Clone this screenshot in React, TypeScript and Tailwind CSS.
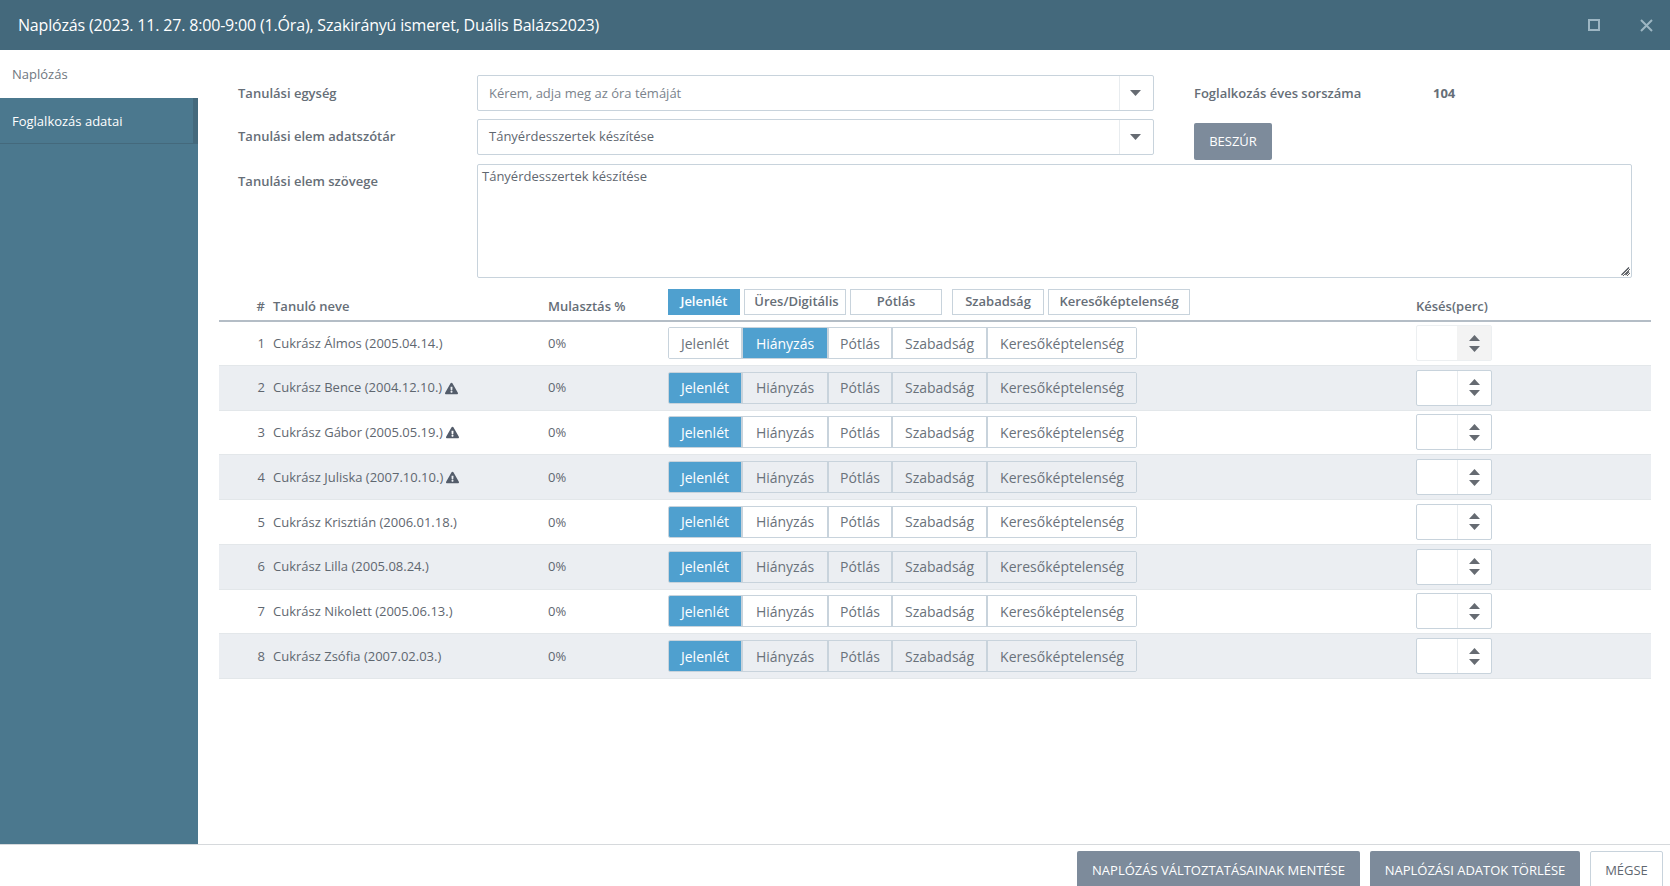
import React from "react";
import { FaExclamationTriangle } from "react-icons/fa";

const students: [string, boolean][] = [
  ["Cukrász Álmos (2005.04.14.)", false],
  ["Cukrász Bence (2004.12.10.)", true],
  ["Cukrász Gábor (2005.05.19.)", true],
  ["Cukrász Juliska (2007.10.10.)", true],
  ["Cukrász Krisztián (2006.01.18.)", false],
  ["Cukrász Lilla (2005.08.24.)", false],
  ["Cukrász Nikolett (2005.06.13.)", false],
  ["Cukrász Zsófia (2007.02.03.)", false],
];

function Caret({ up = false }: { up?: boolean }) {
  return (
    <svg width="11" height="6" viewBox="0 0 11 6">
      <path d={up ? "M0 6 L5.5 0 L11 6 Z" : "M0 0 L11 0 L5.5 6 Z"} fill="#666b72" />
    </svg>
  );
}

function Select({ text, placeholder = false, first = false }: { text: string; placeholder?: boolean; first?: boolean }) {
  return (
    <div className="flex h-[36px] w-[677px] items-stretch rounded-[2px] border border-[#c8d3dc] bg-white">
      <div className={`flex flex-1 items-center pl-[11px] text-[13px] ${first ? "pt-[2px]" : ""} ${placeholder ? "text-[#7b838c]" : "text-[#5f6770]"}`}>{text}</div>
      <div className="flex w-[34px] items-center justify-center border-l border-[#e8ecef] pr-[2px]">
        <Caret />
      </div>
    </div>
  );
}

const segs: [string, string][] = [
  ["Jelenlét", "w-[72px]"],
  ["Hiányzás", "w-[86px]"],
  ["Pótlás", "w-[64px]"],
  ["Szabadság", "w-[95px]"],
  ["Keresőképtelenség", "w-[150px]"],
];

function Segments({ active, shaded }: { active: number; shaded: boolean }) {
  return (
    <div className="flex h-[32px] w-[469px] overflow-hidden rounded-[2px] border border-[#c8d3dc]">
      {segs.map(([label, w], i) => (
        <div
          key={label}
          className={`flex items-center justify-center text-[14px] ${w} ${i > 0 ? "border-l-2 border-[#c8d3dc]" : ""} ${
            i === active
              ? "border-[#4fa0cf] bg-[#4fa0cf] text-white"
              : shaded
              ? "bg-[#ebeef2] text-[#6a727b]"
              : "bg-white text-[#6a727b]"
          }`}
        >
          {label}
        </div>
      ))}
    </div>
  );
}

function Spinner({ disabled }: { disabled: boolean }) {
  return (
    <div className={`flex h-[36px] w-[76px] rounded-[2px] border bg-white ${disabled ? "border-[#eceff1]" : "border-[#c8d3dc]"}`}>
      <div className="flex-1" />
      <div className={`flex w-[34px] flex-col items-center justify-center gap-[5px] border-l pr-[1px] ${disabled ? "border-[#f2f3f3] bg-[#f3f3f3]" : "border-[#e8ecef]"}`}>
        <Caret up />
        <Caret />
      </div>
    </div>
  );
}

function HeadBtn({ label, w, active = false, ml = "", extra = "" }: { label: string; w: string; active?: boolean; ml?: string; extra?: string }) {
  return (
    <div
      className={`flex h-[26px] items-center justify-center border text-[13px] font-semibold ${w} ${ml} ${extra} ${
        active ? "border-[#4fa0cf] bg-[#4fa0cf] text-white" : "border-[#c8d3dc] bg-white text-[#666e77]"
      }`}
    >
      {label}
    </div>
  );
}

export default function App() {
  return (
    <div className="flex h-[886px] w-[1670px] flex-col overflow-hidden bg-white text-[14px] text-[#5f6770] [font-family:'Open_Sans',sans-serif]">
      <header className="flex h-[50px] shrink-0 items-center bg-[#44697c] pl-[18px] pr-[17px] text-white">
        <h1 className="flex-1 text-[16px] font-normal tracking-[-0.18px]">
          Naplózás (2023. 11. 27. 8:00-9:00 (1.Óra), Szakirányú ismeret, Duális Balázs2023)
        </h1>
        <svg width="12" height="12" viewBox="0 0 12 12" className="mr-[40px]">
          <rect x="1" y="1" width="10" height="10" fill="none" stroke="#9db6c3" strokeWidth="2" />
        </svg>
        <svg width="13" height="13" viewBox="0 0 13 13">
          <path d="M1 1 L12 12 M12 1 L1 12" stroke="#9db6c3" strokeWidth="2" fill="none" />
        </svg>
      </header>

      <div className="flex min-h-0 flex-1">
        <aside className="flex w-[198px] shrink-0 flex-col bg-[#4b788e]">
          <div className="flex h-[48px] items-center bg-white pl-[12px] pt-[2px] text-[13px] text-[#6f7780]">Naplózás</div>
          <div className="flex h-[46px] items-center border-r-[5px] border-b border-r-[#44697c] border-b-[#44697c] pl-[12px] pt-[2px] text-[13px] text-white">
            Foglalkozás adatai
          </div>
        </aside>

        <main className="min-w-0 flex-1 pl-[21px] pr-[19px]">
          <div className="flex pt-[25px] pl-[19px]">
            <div className="w-[239px] shrink-0 font-semibold text-[13px] text-[#666e77]">
              <div className="flex h-[36px] items-center pt-[2px]">Tanulási egység</div>
              <div className="mt-[8px] flex h-[36px] items-center">Tanulási elem adatszótár</div>
              <div className="mt-[17px]">Tanulási elem szövege</div>
            </div>
            <div className="w-[1155px] shrink-0">
              <div className="flex">
                <div className="flex flex-col gap-[8px]">
                  <Select text="Kérem, adja meg az óra témáját" placeholder first />
                  <Select text="Tányérdesszertek készítése" />
                </div>
                <div className="ml-[40px]">
                  <div className="flex h-[36px] items-center pt-[2px] text-[13px] font-semibold text-[#666e77]">
                    <span className="w-[239px]">Foglalkozás éves sorszáma</span>
                    <span className="font-bold">104</span>
                  </div>
                  <button className="mt-[12px] h-[37px] w-[78px] rounded-[2px] bg-[#7d8b9b] text-[13px] text-white">BESZÚR</button>
                </div>
              </div>
              <div className="relative mt-[4px]">
                <textarea
                  readOnly
                  defaultValue="Tányérdesszertek készítése"
                  className="block h-[114px] w-[1155px] rounded-[2px] border border-[#c8d3dc] px-[4px] py-[2px] text-[13px] text-[#5f6770] outline-none"
                />
                <svg width="10" height="10" viewBox="0 0 10 10" className="pointer-events-none absolute bottom-[2px] right-[2px]">
                  <path d="M1.5 9 L9 1.5 M5.5 9 L9 5.5" stroke="#4a4f55" strokeWidth="1.2" fill="none" />
                </svg>
              </div>
            </div>
          </div>

          <div className="mt-[11px] flex h-[33px] items-start border-b-2 border-[#b4bdc6] text-[#666e77]">
            <div className="w-[47px] self-end pb-[4px] pr-[1px] text-right text-[13px] font-semibold">#</div>
            <div className="ml-[7px] w-[275px] self-end pb-[4px] text-[13px] font-semibold">Tanuló neve</div>
            <div className="w-[120px] self-end pb-[4px] text-[13px] font-semibold">Mulasztás %</div>
            <div className="flex">
              <HeadBtn label="Jelenlét" w="w-[72px]" active />
              <HeadBtn label="Üres/Digitális" w="w-[102px]" ml="ml-[4px]" extra="pl-[3px]" />
              <HeadBtn label="Pótlás" w="w-[92px]" ml="ml-[4px]" />
              <HeadBtn label="Szabadság" w="w-[92px]" ml="ml-[10px]" />
              <HeadBtn label="Keresőképtelenség" w="w-[142px]" ml="ml-[4px]" />
            </div>
            <div className="ml-[226px] self-end pb-[4px] text-[13px] font-semibold">Késés(perc)</div>
          </div>

          {students.map(([name, warn], i) => {
            const shaded = i % 2 === 1;
            return (
              <div key={name} className={`flex items-center border-b border-[#e3e7ea] ${i === 0 ? "h-[43.75px]" : "h-[44.75px]"} ${shaded ? "bg-[#ebeef2]" : "bg-white"}`}>
                <div className="w-[46px] pt-[1px] text-right text-[13px]">{i + 1}</div>
                <div className="ml-[8px] flex w-[275px] items-center gap-[3px] pt-[1px] text-[13px]">
                  {name}
                  {warn && <FaExclamationTriangle className="text-[13px] text-[#535c6a]" />}
                </div>
                <div className="w-[120px] pt-[1px] text-[13px]">0%</div>
                <Segments active={i === 0 ? 1 : 0} shaded={shaded} />
                <div className="ml-[279px]">
                  <Spinner disabled={i === 0} />
                </div>
              </div>
            );
          })}
        </main>
      </div>

      <footer className="flex h-[42px] shrink-0 justify-end gap-[10px] border-t border-[#d6d9dc] pr-[7px] pt-[6px]">
        <button className="h-[40px] w-[283px] rounded-[2px] bg-[#7d8b9b] text-[13px] text-white">NAPLÓZÁS VÁLTOZTATÁSAINAK MENTÉSE</button>
        <button className="h-[40px] w-[210px] rounded-[2px] bg-[#7d8b9b] text-[13px] text-white">NAPLÓZÁSI ADATOK TÖRLÉSE</button>
        <button className="h-[40px] w-[73px] rounded-[2px] border border-[#c8d3dc] bg-white text-[13px] text-[#5f6770]">MÉGSE</button>
      </footer>
    </div>
  );
}
